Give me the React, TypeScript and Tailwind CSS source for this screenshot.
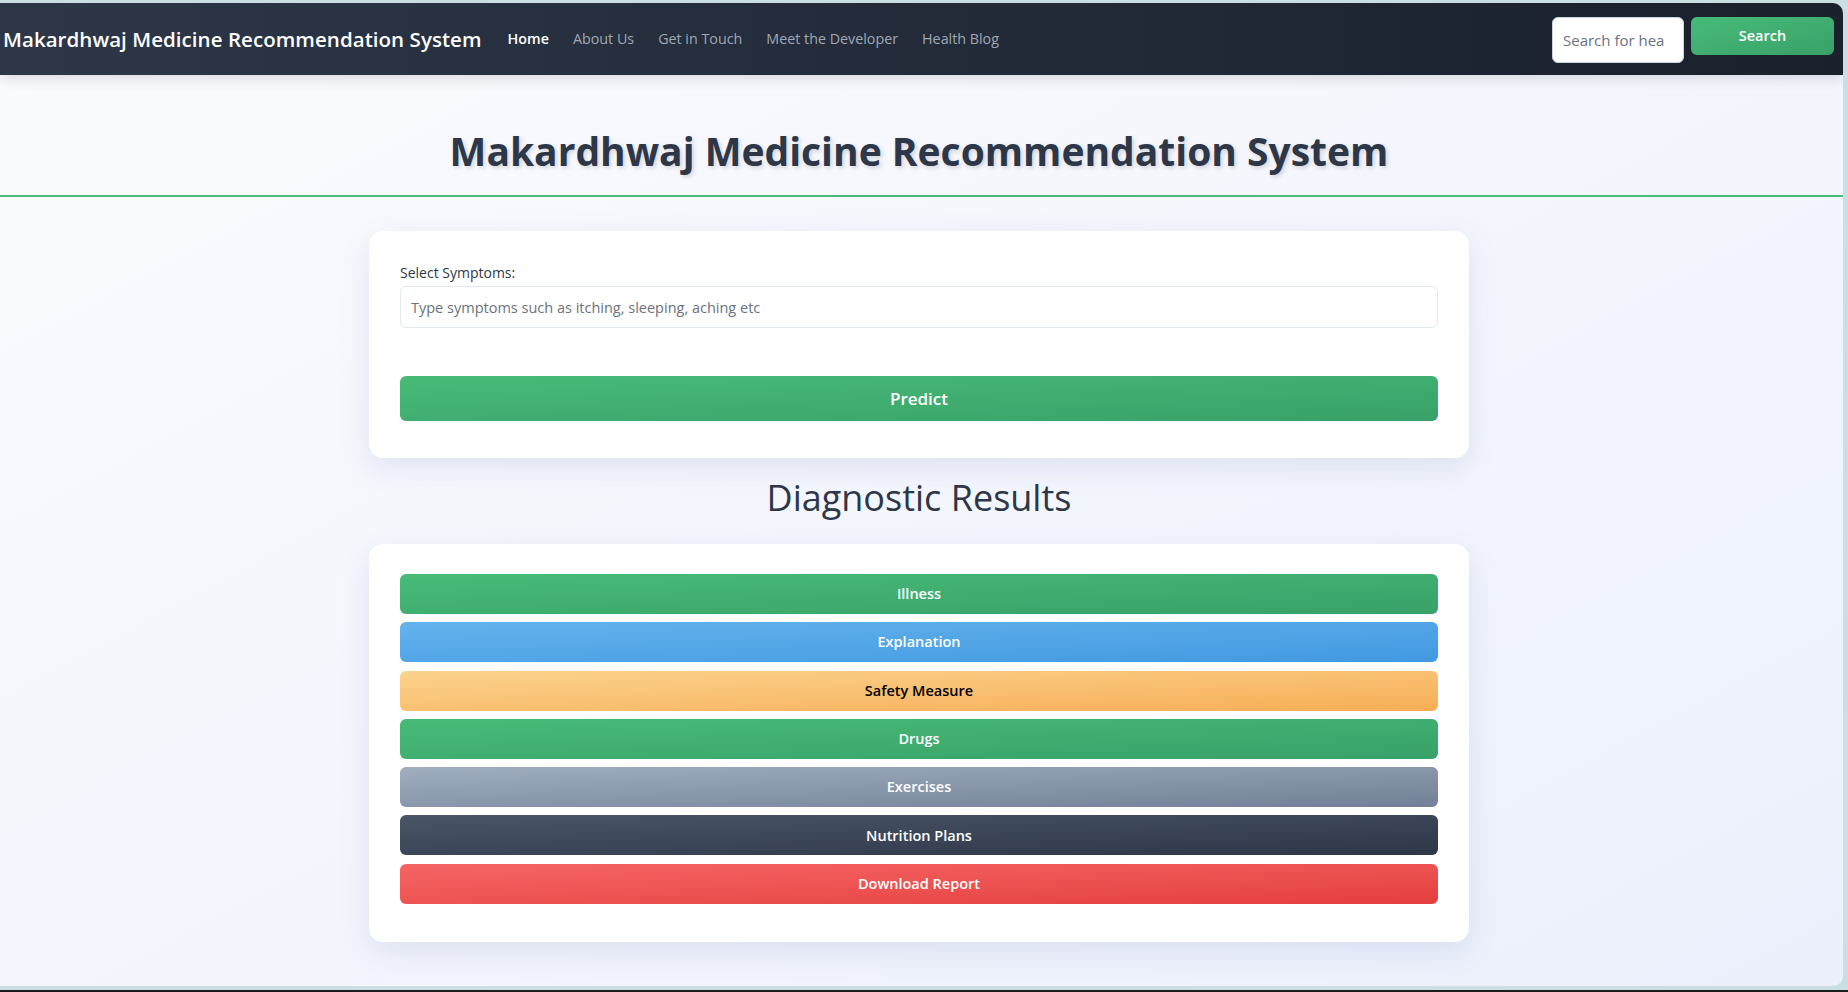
import React from 'react';

const font = { fontFamily: '"Open Sans", "Noto Sans", sans-serif' };

const navLinks = ['Home', 'About Us', 'Get in Touch', 'Meet the Developer', 'Health Blog'];

const results: { label: string; className: string }[] = [
    { label: 'Illness', className: 'from-[#48bb78] to-[#38a169] text-white' },
    { label: 'Explanation', className: 'from-[#63b3ed] to-[#4299e1] text-white' },
    { label: 'Safety Measure', className: 'from-[#fbd38d] to-[#f6ad55] text-black' },
    { label: 'Drugs', className: 'from-[#48bb78] to-[#38a169] text-white' },
    { label: 'Exercises', className: 'from-[#a0aec0] to-[#718096] text-white' },
    { label: 'Nutrition Plans', className: 'from-[#4a5568] to-[#2d3748] text-white' },
    { label: 'Download Report', className: 'from-[#f56565] to-[#e53e3e] text-white' },
];

const Navbar: React.FC = () => (
    <nav className="relative z-10 flex h-[72px] shrink-0 items-center justify-between bg-gradient-to-r from-[#2d3748] to-[#1a202c] pl-[3px] pr-[9px] shadow-[0_4px_12px_rgba(0,0,0,0.12)]">
        <div className="flex items-center">
            <span className="text-[20.5px] font-semibold tracking-[0.05px] text-white">
                Makardhwaj Medicine Recommendation System
            </span>
            <ul className="ml-[26px] flex items-center gap-[24px] text-[14.3px] font-medium">
                {navLinks.map((link, i) => (
                    <li key={link} className={i === 0 ? 'text-white font-semibold' : 'text-[#a0a7b4]'}>
                        {link}
                    </li>
                ))}
            </ul>
        </div>
        <form className="flex items-start gap-[7px] self-start pt-[13.5px]" onSubmit={(e) => e.preventDefault()}>
            <input
                type="text"
                placeholder="Search for health tips"
                className="h-[46px] w-[132px] rounded-[6px] border border-[#cbd5e0] bg-white pl-[10px] pr-[18px] text-[15px] text-[#4a5568] placeholder:text-[#6b7280] outline-none"
            />
            <button className="h-[38px] w-[143px] rounded-[6px] bg-gradient-to-br from-[#48bb78] to-[#38a169] text-[14.5px] font-semibold text-white">
                Search
            </button>
        </form>
    </nav>
);

const App: React.FC = () => {
    return (
        <div className="flex h-[992px] w-full flex-col bg-[#c9dfe1]" style={font}>
            <div className="mt-[3px] mr-[5px] flex h-[983px] flex-col overflow-hidden rounded-r-[10px] bg-gradient-to-br from-[#fafbfe] via-[#f4f6fd] to-[#ebf0fc]">
                <Navbar />

                <header className="border-b-2 border-[#48bb78] pt-[46px] pb-[14px] pr-[5px] text-center">
                    <h1 className="text-[39px] font-bold leading-[60px] text-[#2d3748] [text-shadow:2px_2px_4px_rgba(0,0,0,0.15)]">
                        Makardhwaj Medicine Recommendation System
                    </h1>
                </header>

                <main className="flex flex-col items-center pr-[5px] pt-[34px]">
                    <section className="w-[1100px] rounded-[14px] bg-white px-[31px] pt-[31px] pb-[37px] shadow-[0_10px_30px_rgba(90,105,170,0.14)]">
                        <label className="mb-[3px] block text-[14px] font-medium leading-[21px] text-[#2d3748]">
                            Select Symptoms:
                        </label>
                        <input
                            type="text"
                            placeholder="Type symptoms such as itching, sleeping, aching etc"
                            className="block h-[42px] w-full rounded-[6px] border border-[#e2e8f0] bg-white px-[10px] text-[14.5px] text-[#4a5568] placeholder:text-[#6b7280] outline-none"
                        />
                        <button className="mt-[48px] block h-[45px] w-full rounded-[6px] bg-gradient-to-br from-[#48bb78] to-[#38a169] text-[17px] font-semibold text-white">
                            Predict
                        </button>
                    </section>

                    <h2 className="mt-[20px] mb-[26px] text-[36px] font-normal leading-[40px] text-[#2d3748]">
                        Diagnostic Results
                    </h2>

                    <section className="flex w-[1100px] flex-col gap-[8.3px] rounded-[14px] bg-white px-[31px] pt-[30px] pb-[38px] shadow-[0_10px_30px_rgba(90,105,170,0.14)]">
                        {results.map((r) => (
                            <button
                                key={r.label}
                                className={`h-[40px] w-full rounded-[6px] bg-gradient-to-br text-[14.5px] font-semibold ${r.className}`}
                            >
                                {r.label}
                            </button>
                        ))}
                    </section>
                </main>
            </div>
            <div className="mt-auto h-[2px] bg-[#1c1c1c]" />
        </div>
    );
};

export default App;
